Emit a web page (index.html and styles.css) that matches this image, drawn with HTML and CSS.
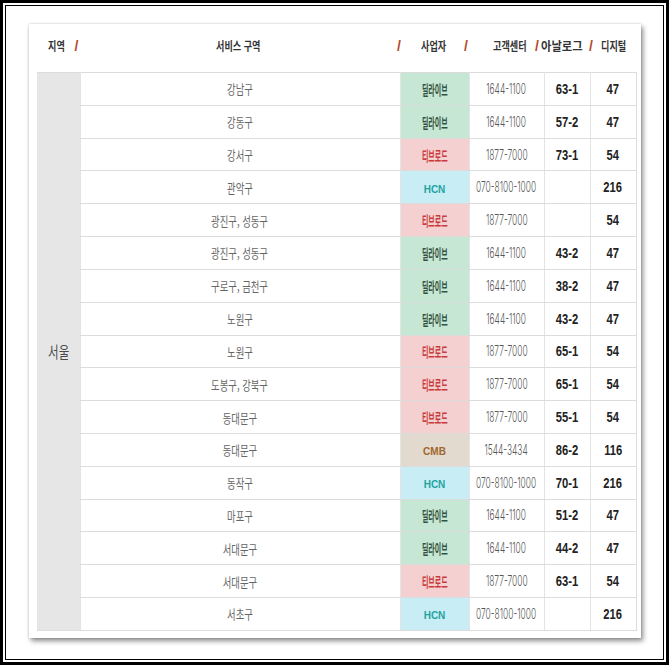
FILE: index.html
```html
<!DOCTYPE html>
<html lang="ko">
<head>
<meta charset="utf-8">
<title>서비스 구역</title>
<link rel="stylesheet" href="styles.css">
</head>
<body>
<div class="frame">
  <div class="frame-inner">
    <div class="card">
      <div class="head">
        <div class="h h-region"><span class="t">지역</span></div>
        <div class="sl">/</div>
        <div class="h h-area"><span class="t">서비스 구역</span></div>
        <div class="sl">/</div>
        <div class="h h-prov"><span class="t">사업자</span></div>
        <div class="sl">/</div>
        <div class="h h-cs"><span class="t">고객센터</span></div>
        <div class="sl">/</div>
        <div class="h h-an"><span class="t">아날로그</span><span class="sl-in">/</span></div>
        <div class="h h-dg"><span class="t">디지털</span></div>
      </div>
      <table class="tbl">
        <colgroup>
          <col class="c-reg"><col class="c-area"><col class="c-prov"><col class="c-cs"><col class="c-an"><col class="c-dg">
        </colgroup>
        <tbody>
          <tr><td class="reg" rowspan="17"><span class="t">서울</span></td><td class="area"><span class="t">강남구</span></td><td class="prov dl"><span class="t">딜라이브</span></td><td class="cs"><span class="t">1644-1100</span></td><td class="num"><span class="t">63-1</span></td><td class="num"><span class="t">47</span></td></tr>
          <tr><td class="area"><span class="t">강동구</span></td><td class="prov dl"><span class="t">딜라이브</span></td><td class="cs"><span class="t">1644-1100</span></td><td class="num"><span class="t">57-2</span></td><td class="num"><span class="t">47</span></td></tr>
          <tr><td class="area"><span class="t">강서구</span></td><td class="prov tb"><span class="t">티브로드</span></td><td class="cs"><span class="t">1877-7000</span></td><td class="num"><span class="t">73-1</span></td><td class="num"><span class="t">54</span></td></tr>
          <tr><td class="area"><span class="t">관악구</span></td><td class="prov hcn"><span class="t">HCN</span></td><td class="cs"><span class="t">070-8100-1000</span></td><td class="num"></td><td class="num"><span class="t">216</span></td></tr>
          <tr><td class="area"><span class="t">광진구, 성동구</span></td><td class="prov tb"><span class="t">티브로드</span></td><td class="cs"><span class="t">1877-7000</span></td><td class="num"></td><td class="num"><span class="t">54</span></td></tr>
          <tr><td class="area"><span class="t">광진구, 성동구</span></td><td class="prov dl"><span class="t">딜라이브</span></td><td class="cs"><span class="t">1644-1100</span></td><td class="num"><span class="t">43-2</span></td><td class="num"><span class="t">47</span></td></tr>
          <tr><td class="area"><span class="t">구로구, 금천구</span></td><td class="prov dl"><span class="t">딜라이브</span></td><td class="cs"><span class="t">1644-1100</span></td><td class="num"><span class="t">38-2</span></td><td class="num"><span class="t">47</span></td></tr>
          <tr><td class="area"><span class="t">노원구</span></td><td class="prov dl"><span class="t">딜라이브</span></td><td class="cs"><span class="t">1644-1100</span></td><td class="num"><span class="t">43-2</span></td><td class="num"><span class="t">47</span></td></tr>
          <tr><td class="area"><span class="t">노원구</span></td><td class="prov tb"><span class="t">티브로드</span></td><td class="cs"><span class="t">1877-7000</span></td><td class="num"><span class="t">65-1</span></td><td class="num"><span class="t">54</span></td></tr>
          <tr><td class="area"><span class="t">도봉구, 강북구</span></td><td class="prov tb"><span class="t">티브로드</span></td><td class="cs"><span class="t">1877-7000</span></td><td class="num"><span class="t">65-1</span></td><td class="num"><span class="t">54</span></td></tr>
          <tr><td class="area"><span class="t">동대문구</span></td><td class="prov tb"><span class="t">티브로드</span></td><td class="cs"><span class="t">1877-7000</span></td><td class="num"><span class="t">55-1</span></td><td class="num"><span class="t">54</span></td></tr>
          <tr><td class="area"><span class="t">동대문구</span></td><td class="prov cmb"><span class="t">CMB</span></td><td class="cs"><span class="t">1544-3434</span></td><td class="num"><span class="t">86-2</span></td><td class="num"><span class="t">116</span></td></tr>
          <tr><td class="area"><span class="t">동작구</span></td><td class="prov hcn"><span class="t">HCN</span></td><td class="cs"><span class="t">070-8100-1000</span></td><td class="num"><span class="t">70-1</span></td><td class="num"><span class="t">216</span></td></tr>
          <tr><td class="area"><span class="t">마포구</span></td><td class="prov dl"><span class="t">딜라이브</span></td><td class="cs"><span class="t">1644-1100</span></td><td class="num"><span class="t">51-2</span></td><td class="num"><span class="t">47</span></td></tr>
          <tr><td class="area"><span class="t">서대문구</span></td><td class="prov dl"><span class="t">딜라이브</span></td><td class="cs"><span class="t">1644-1100</span></td><td class="num"><span class="t">44-2</span></td><td class="num"><span class="t">47</span></td></tr>
          <tr><td class="area"><span class="t">서대문구</span></td><td class="prov tb"><span class="t">티브로드</span></td><td class="cs"><span class="t">1877-7000</span></td><td class="num"><span class="t">63-1</span></td><td class="num"><span class="t">54</span></td></tr>
          <tr><td class="area"><span class="t">서초구</span></td><td class="prov hcn"><span class="t">HCN</span></td><td class="cs"><span class="t">070-8100-1000</span></td><td class="num"></td><td class="num"><span class="t">216</span></td></tr>
        </tbody>
      </table>
    </div>
  </div>
</div>
</body>
</html>
```

FILE: styles.css
```css
* { box-sizing: border-box; }
html, body { margin: 0; padding: 0; background: #fff; }
body { font-family: "Noto Sans CJK KR", "Noto Sans", sans-serif; }

.frame {
  width: 669px;
  height: 665px;
  border: 3px solid #000;
  padding: 2px;
  background: #fff;
}
.frame-inner {
  height: 100%;
  border: 1px solid #000;
  padding: 18px 0 0 23px;
}
.card {
  width: 612px;
  height: 614px;
  background: #fff;
  padding: 0 5px 0 8px;
  box-shadow: 2px 3px 5px rgba(0, 0, 0, 0.45), 0 0 2px rgba(0, 0, 0, 0.18);
}

/* header */
.head {
  height: 48px;
  display: grid;
  grid-template-columns: 36px 7px 315px 8px 59px 8px 63px 8px 58px 37px;
  align-items: center;
  padding-bottom: 4px;
}
.h {
  font-size: 12px;
  font-weight: 700;
  color: #333;
  white-space: nowrap;
  line-height: 1;
}
.h .t {
  display: inline-block;
  transform: scaleX(0.76);
  transform-origin: left center;
}
.h-region { padding-left: 11px; }
.h-area { padding-left: 136px; }
.h-prov { padding-left: 18px; }
.h-cs { padding-left: 23px; }
.h-an { display: flex; align-items: center; }
.h-an .t { transform: scaleX(0.94); width: 48px; }
.h-dg { padding-left: 2px; }
.sl, .sl-in {
  font: bold 14px "Liberation Sans", sans-serif;
  color: #b34a2c;
  text-align: center;
  line-height: 1;
}

/* table */
.tbl {
  width: 599px;
  table-layout: fixed;
  border-collapse: collapse;
  border-top: 1px solid #dcdcdc;
}
.c-reg { width: 43px; }
.c-area { width: 320px; }
.c-prov { width: 69px; }
.c-cs { width: 75px; }
.c-an { width: 46px; }
.c-dg { width: 46px; }

.tbl td {
  height: 32.82px;
  padding: 0;
  text-align: center;
  vertical-align: middle;
  white-space: nowrap;
  border-bottom: 1px solid #dcdcdc;
  border-left: 1px solid #e4e4e4;
  line-height: 1;
}
.tbl td:last-child { border-right: 1px solid #dcdcdc; }
.tbl .t { display: inline-block; }

.reg {
  background: #e6e6e6;
  color: #4a4a4a;
  font-size: 16px;
}
.tbl .reg { border-left: none; }
.reg .t { transform: scaleX(0.72); }

.area { font-size: 13px; color: #666; }
.area .t { transform: scaleX(0.72); }

.prov { font-size: 14px; font-weight: 700; }
.prov .t { transform: scaleX(0.5); margin: 0 -20px; }
.dl { background: #c5e7d3; color: #34503f; }
.tb { background: #f4d0d0; color: #c83a3c; }
.hcn { background: #c8edf4; color: #1fa3a3; }
.cmb { background: #e2d9cf; color: #a0672a; }
.hcn .t, .cmb .t {
  font-family: "Liberation Sans Narrow", "Liberation Sans", sans-serif;
  font-size: 10px;
  transform: none;
  margin: 0;
}

.cs {
  font-family: "Inter", "Liberation Sans", sans-serif;
  font-size: 14px;
  font-weight: 300;
  color: #555;
  font-variant-numeric: proportional-nums;
}
.cs .t { transform: scaleX(0.6); margin: 0 -30px; }

.num {
  font-family: "Liberation Sans Narrow", "Liberation Sans", sans-serif;
  font-size: 14px;
  font-weight: 700;
  color: #222;
}
.num .t { transform: scaleX(0.8); }
```
